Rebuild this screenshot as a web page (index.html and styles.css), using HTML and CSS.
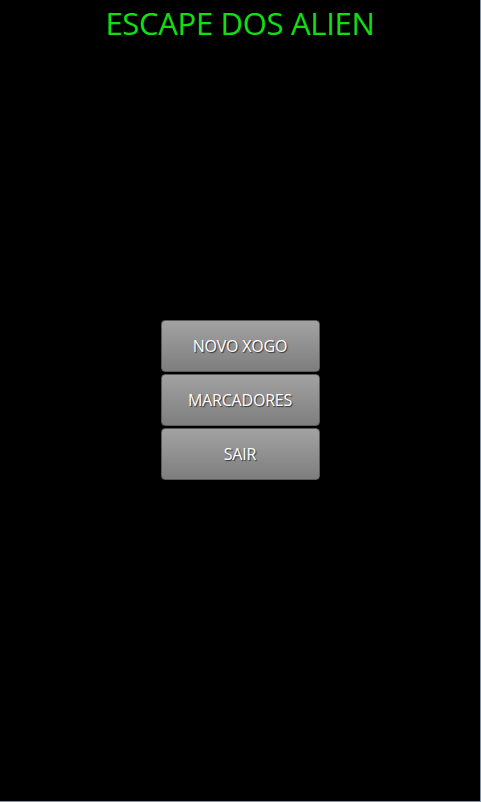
FILE: index.html
```html
<!DOCTYPE html>
<html>
<head>
<meta charset="utf-8">
<link rel="stylesheet" href="styles.css">
</head>
<body>
<div class="screen">
  <h1 class="title">ESCAPE DOS ALIEN</h1>
  <div class="menu">
    <button class="btn">NOVO XOGO</button>
    <button class="btn">MARCADORES</button>
    <button class="btn">SAIR</button>
  </div>
</div>
</body>
</html>
```
FILE: styles.css
```css
html, body {
  margin: 0;
  padding: 0;
  background: #000;
}
.screen {
  width: 480px;
  height: 801px;
  background: #000;
  border-right: 1px solid #8196ab;
  border-bottom: 1px solid #8196ab;
  display: grid;
  grid-template-areas: "stack";
  font-family: "Open Sans", "DejaVu Sans", sans-serif;
}
.title {
  grid-area: stack;
  align-self: start;
  margin: 3px 0 0 0;
  text-align: center;
  color: #10e010;
  font-weight: 400;
  font-size: 31px;
  line-height: 40px;
  letter-spacing: -0.3px;
}
.menu {
  grid-area: stack;
  align-self: center;
  justify-self: center;
  display: flex;
  flex-direction: column;
  gap: 2px;
  margin: 0 0 1px 0;
}
.btn {
  width: 159px;
  height: 52px;
  margin: 0;
  padding: 0 0 1px 0;
  border: 1px solid #5a5a5a;
  border-radius: 4px;
  background: linear-gradient(#a2a2a2, #7e7e7e);
  color: #fff;
  font-family: "Open Sans", "DejaVu Sans", sans-serif;
  font-size: 16px;
  letter-spacing: -0.2px;
  text-shadow: 1px 1px 1px #333;
}
```
